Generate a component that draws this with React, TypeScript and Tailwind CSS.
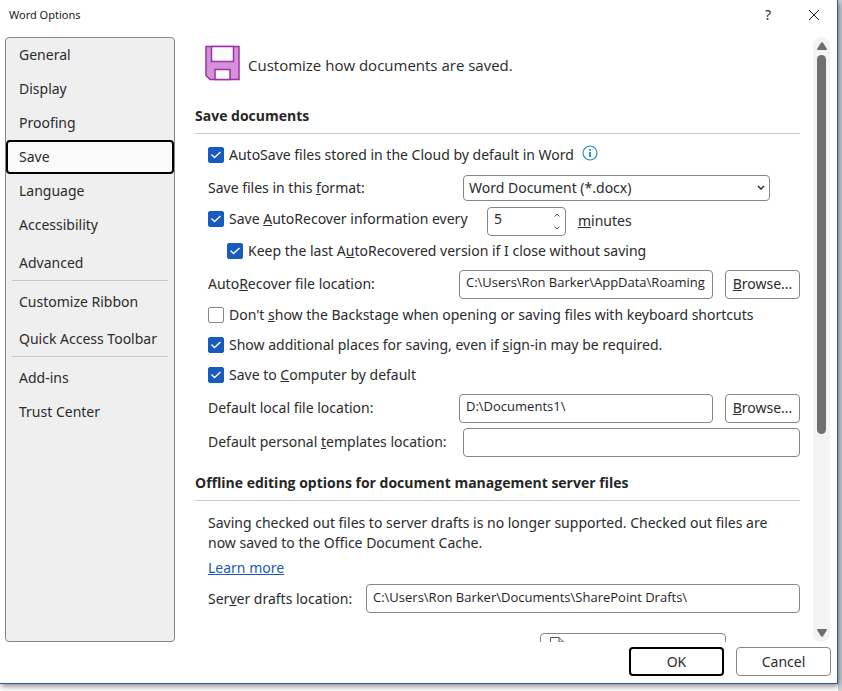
import React from 'react';

interface CheckProps {
  id: string;
  checked?: boolean;
  children: React.ReactNode;
}

const fieldClass = "h-[29px] min-w-0 rounded-[4px] border border-[#868686] bg-white px-1.5 pb-1 font-['Open_Sans',sans-serif] text-[13px] text-[#1f1f1f] outline-none";
const buttonClass = 'h-[29px] rounded-[4px] border border-[#868686] bg-white text-center';

const Check: React.FC<CheckProps> = ({ id, checked = false, children }) => (
  <div className="flex items-center gap-[5px]">
    <span className="grid h-4 w-4 shrink-0">
      <input
        id={id}
        type="checkbox"
        defaultChecked={checked}
        className="peer col-start-1 row-start-1 h-4 w-4 appearance-none rounded-[2px] border border-[#868686] bg-white checked:border-[#185abd] checked:bg-[#185abd]"
      />
      <svg viewBox="0 0 16 16" className="pointer-events-none invisible col-start-1 row-start-1 h-4 w-4 peer-checked:visible" fill="none" stroke="#fff" strokeWidth={1.4}>
        <path d="M3.5 7.5 6.5 10.5 12.5 5" />
      </svg>
    </span>
    <label htmlFor={id} className="whitespace-nowrap">{children}</label>
  </div>
);

const NavItem: React.FC<{ label: string; active?: boolean }> = ({ label, active }) => (
  <button
    className={
      active
        ? 'block h-[34px] w-full rounded-[4px] border-2 border-black bg-[#fafafa] pl-[11px] text-left'
        : 'block h-[34px] w-full pl-[13px] text-left whitespace-nowrap'
    }
  >
    {label}
  </button>
);

const Separator = () => <hr className="mx-1.5 border-[#c8c8c8]" />;

const SectionTitle: React.FC<{ children: React.ReactNode }> = ({ children }) => (
  <h2 className="border-b border-[#c8c8c8] pt-px pb-[7px] font-['Open_Sans',sans-serif] font-bold leading-5 text-[#262626]">{children}</h2>
);

export default function App() {
  return (
    <div className="h-screen overflow-hidden bg-[#d2d2d2] pr-1 font-['Noto_Sans',sans-serif] text-[14px] leading-5 text-[#2b2b2b]">
      <div className="h-full bg-white pb-[7px]">
        <div className="flex h-full flex-col border-r border-b border-[#1f5bb5] bg-white shadow-[1px_2px_6px_rgba(0,0,0,0.5)]">
          <header className="flex h-[37px] shrink-0 items-center pr-[17px] pb-[7px] pl-[9px]">
            <h1 className="flex-1 text-[11px] text-[#1a1a1a]">Word Options</h1>
            <button aria-label="Help" className="mr-[34px] w-3 text-center">?</button>
            <button aria-label="Close">
              <svg viewBox="0 0 12 12" className="h-3 w-3" stroke="#1f1f1f" strokeWidth={1}>
                <path d="M1 1 11 11M11 1 1 11" />
              </svg>
            </button>
          </header>

          <div className="flex min-h-0 flex-1 pr-[7px] pl-[5px]">
            <nav className="w-[170px] shrink-0 rounded-[4px] border border-[#868686] bg-[#efefef]">
              <NavItem label="General" />
              <NavItem label="Display" />
              <NavItem label="Proofing" />
              <NavItem label="Save" active />
              <NavItem label="Language" />
              <NavItem label="Accessibility" />
              <div className="pt-1">
                <NavItem label="Advanced" />
              </div>
              <Separator />
              <div className="flex flex-col gap-[3px] pt-1">
                <NavItem label="Customize Ribbon" />
                <NavItem label="Quick Access Toolbar" />
              </div>
              <Separator />
              <div className="pt-1">
                <NavItem label="Add-ins" />
                <NavItem label="Trust Center" />
              </div>
            </nav>

            <main className="ml-5 min-w-0 flex-1 overflow-hidden pt-2">
              <div className="mb-6 flex items-center gap-2 pl-2.5">
                <svg viewBox="0 0 35 36" className="h-9 w-[35px]" strokeWidth={1.5}>
                  <path d="M1 1.5H34V34.5H5L1 30.5Z" fill="#d591da" stroke="#9a35a3" />
                  <path d="M6.5 1.5H28.5V16.5H6.5Z" fill="#fafafa" stroke="#9a35a3" />
                  <path d="M10 34.5V24.5H25V34.5Z" fill="#fafafa" stroke="#9a35a3" />
                </svg>
                <p className="pt-1 font-['Open_Sans',sans-serif] text-[15px]">Customize how documents are saved.</p>
              </div>

              <SectionTitle>Save documents</SectionTitle>
              <div className="pt-1.5 pl-[13px]">
                <div className="flex h-[30px] items-center gap-2">
                  <Check id="autosave" checked>AutoSave files stored in the Cloud by default in Word</Check>
                  <svg viewBox="0 0 16 16" className="mb-1 h-4 w-4" fill="none" stroke="#1e8bcd">
                    <circle cx="8" cy="8" r="7" strokeWidth={1.2} />
                    <path d="M8 4V5.8M8 7V12" strokeWidth={1.8} />
                  </svg>
                </div>
                <div className="flex h-9 items-center pr-[30px]">
                  <label htmlFor="format" className="w-[255px]">Save files in this <u>f</u>ormat:</label>
                  <div className="grid min-w-0 flex-1 items-center">
                    <select id="format" className="col-start-1 row-start-1 h-[26px] appearance-none rounded-[4px] border border-[#868686] bg-white pl-[5px]">
                      <option>Word Document (*.docx)</option>
                    </select>
                    <svg viewBox="0 0 8 6" className="pointer-events-none col-start-1 row-start-1 mr-[5px] h-1.5 w-2 justify-self-end" fill="none" stroke="#222" strokeWidth={1.4}>
                      <path d="M1 1 4 4 7 1" />
                    </svg>
                  </div>
                </div>
                <div className="flex h-[30px] items-center">
                  <div className="w-[279px] pb-1">
                    <Check id="autorecover" checked>Save <u>A</u>utoRecover information every</Check>
                  </div>
                  <div className="mr-3 flex h-[29px] w-[79px] rounded-[4px] border border-[#868686] pr-1">
                    <input id="minutes" defaultValue="5" className="min-w-0 flex-1 bg-transparent pb-1 pl-1.5 outline-none" />
                    <div className="flex flex-col justify-between py-1">
                      <button aria-label="More minutes">
                        <svg viewBox="0 0 8 6" className="block h-1.5 w-2" fill="none" stroke="#555"><path d="M1.5 4.5 4 2 6.5 4.5" /></svg>
                      </button>
                      <button aria-label="Fewer minutes">
                        <svg viewBox="0 0 8 6" className="block h-1.5 w-2" fill="none" stroke="#555"><path d="M1.5 1.5 4 4 6.5 1.5" /></svg>
                      </button>
                    </div>
                  </div>
                  <label htmlFor="minutes"><u>m</u>inutes</label>
                </div>
                <div className="flex h-[30px] items-center pl-[19px]">
                  <Check id="keep" checked>Keep the last A<u>u</u>toRecovered version if I close without saving</Check>
                </div>
                <div className="flex h-9 items-center">
                  <label htmlFor="recoverPath" className="w-[251px]">Auto<u>R</u>ecover file location:</label>
                  <input id="recoverPath" defaultValue="C:\Users\Ron Barker\AppData\Roaming" className={`${fieldClass} flex-1`} />
                  <button className={`${buttonClass} ml-3 w-[75px]`}><u>B</u>rowse...</button>
                </div>
                <div className="-mt-0.5 flex h-[30px] items-center">
                  <Check id="backstage">Don't <u>s</u>how the Backstage when opening or saving files with keyboard shortcuts</Check>
                </div>
                <div className="flex h-[30px] items-center">
                  <Check id="places" checked>Show additional places for saving, even if <u>s</u>ign-in may be required.</Check>
                </div>
                <div className="flex h-[30px] items-center">
                  <Check id="computer" checked>Save to <u>C</u>omputer by default</Check>
                </div>
                <div className="flex h-9 items-center">
                  <label htmlFor="localPath" className="w-[251px]">Default local f<u>i</u>le location:</label>
                  <input id="localPath" defaultValue="D:\Documents1\" className={`${fieldClass} flex-1`} />
                  <button className={`${buttonClass} ml-3 w-[75px]`}><u>B</u>rowse...</button>
                </div>
                <div className="flex h-8 items-center">
                  <label htmlFor="templates" className="w-[255px]">Default personal <u>t</u>emplates location:</label>
                  <input id="templates" className={`${fieldClass} flex-1`} />
                </div>
              </div>

              <div className="pt-3.5">
                <SectionTitle>Offline editing options for document management server files</SectionTitle>
              </div>
              <div className="pt-3 pl-[13px]">
                <p className="pr-6">Saving checked out files to server drafts is no longer supported. Checked out files are now saved to the Office Document Cache.</p>
                <a href="#learn" className="mt-[5px] block w-fit text-[#185abd] underline">Learn more</a>
                <div className="mt-1.5 flex items-center">
                  <label htmlFor="drafts" className="w-[158px]">Ser<u>v</u>er drafts location:</label>
                  <input id="drafts" defaultValue="C:\Users\Ron Barker\Documents\SharePoint Drafts\" className={`${fieldClass} flex-1`} />
                </div>
                <button aria-label="Document" className="mt-5 mr-[74px] ml-auto flex h-[29px] w-[186px] rounded-[4px] border border-[#868686] pt-[3px] pl-[9px]">
                  <svg viewBox="0 0 14 16" className="h-4 w-3.5" fill="none" stroke="#555">
                    <path d="M.5 15.5V.5H9L13.5 5V15.5ZM9 .5V5H13.5" />
                  </svg>
                </button>
              </div>
            </main>

            <div className="ml-[13px] flex w-[17px] shrink-0 flex-col items-center rounded-full bg-[#f3f3f3] py-[5px]">
              <svg viewBox="0 0 10 8" className="mb-[5px] h-2 w-2.5 shrink-0" fill="#6f6f6f"><path d="M4 .7Q5-.3 6 .7L10 7Q10 8 9 8H1Q0 8 0 7Z" /></svg>
              <div className="min-h-0 w-full flex-1">
                <div className="mx-auto h-[66%] w-[9px] rounded-full bg-[#6f6f6f]" />
              </div>
              <svg viewBox="0 0 10 8" className="h-2 w-2.5 shrink-0" fill="#6f6f6f"><path d="M4 7.3Q5 8.3 6 7.3L10 1Q10 0 9 0H1Q0 0 0 1Z" /></svg>
            </div>
          </div>

          <footer className="flex h-[41px] shrink-0 justify-end gap-3 pt-[5px] pr-1.5">
            <button className="h-[29px] w-[95px] rounded-[4px] border-2 border-black bg-white">OK</button>
            <button className={`${buttonClass} w-[95px]`}>Cancel</button>
          </footer>
        </div>
      </div>
    </div>
  );
}
